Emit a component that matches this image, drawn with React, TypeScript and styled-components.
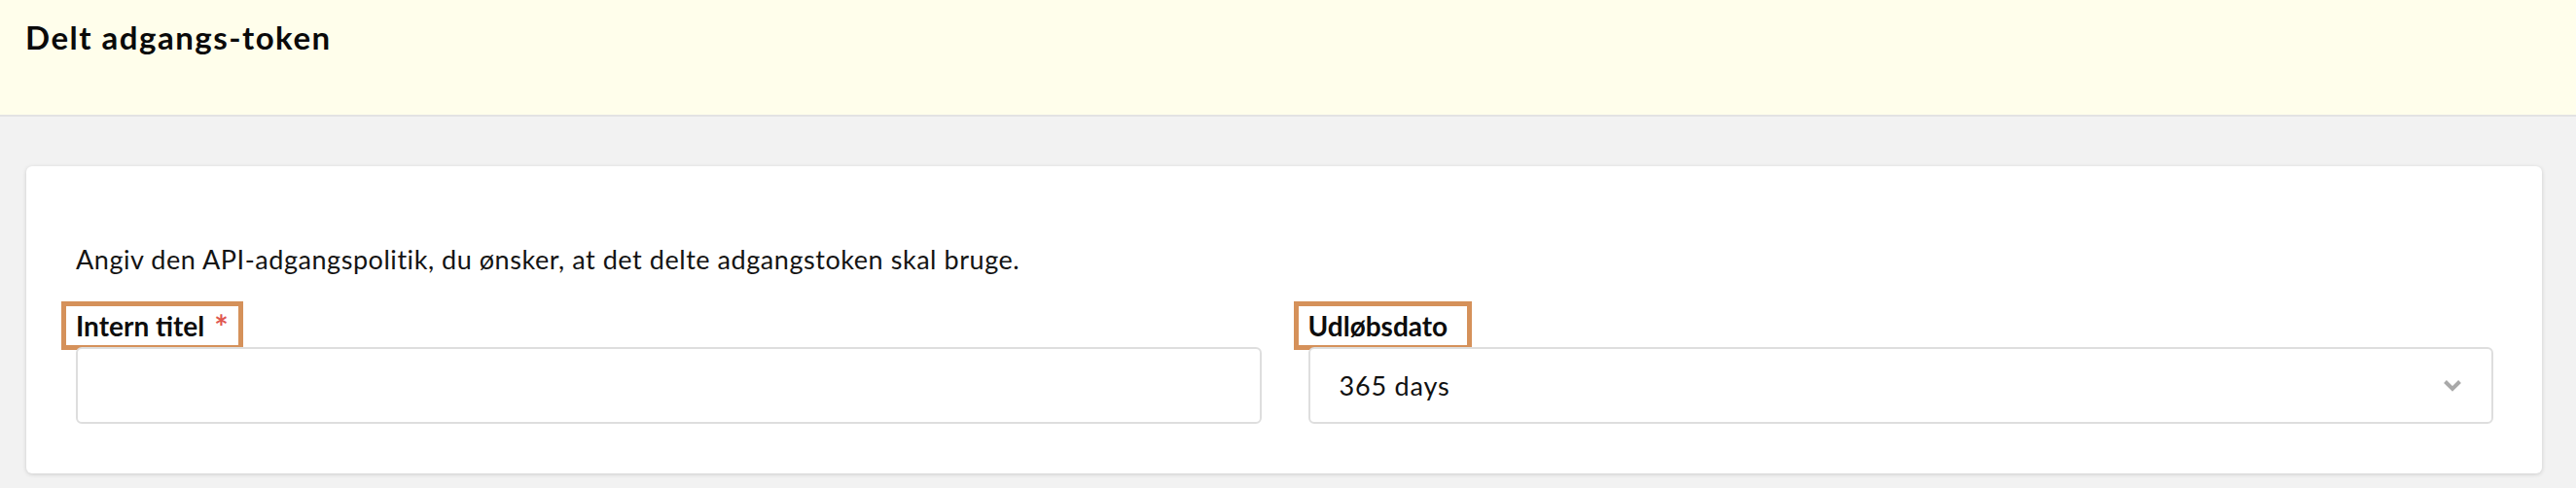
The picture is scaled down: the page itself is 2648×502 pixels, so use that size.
import React from "react";
import styled, { createGlobalStyle } from "styled-components";

const GlobalStyle = createGlobalStyle`
  html, body {
    margin: 0;
    padding: 0;
    background: #f2f2f2;
    font-family: Lato, "Liberation Sans", Arial, sans-serif;
    color: #111;
  }
  * { box-sizing: border-box; }
`;

const Header = styled.header`
  height: 120px;
  background: #fffeeb;
  border-bottom: 2px solid #e3e3e3;
  padding: 18px 26px 0;
`;

const Title = styled.h1`
  margin: 0;
  font-size: 33px;
  line-height: 40px;
  font-weight: 700;
  color: #0a0a0a;
  letter-spacing: 1.5px;
`;

const Main = styled.main`
  padding: 51px 35px 13px 27px;
`;

const Card = styled.section`
  background: #ffffff;
  border-radius: 6px;
  box-shadow: 0 1px 4px rgba(0, 0, 0, 0.16);
  padding: 80px 50px 51px 51px;
`;

const Description = styled.p`
  margin: 0 0 32px;
  font-size: 27px;
  line-height: 32px;
  letter-spacing: 0.55px;
  color: #141414;
`;

const Fields = styled.div`
  display: grid;
  grid-template-columns: 1fr 1fr;
  column-gap: 48px;
`;

const Field = styled.div`
  display: flex;
  flex-direction: column;
`;

const Label = styled.label<{ $padRight: number }>`
  align-self: flex-start;
  display: flex;
  align-items: center;
  height: 40px;
  margin: 0 0 2px -10px;
  padding: 0 ${(p) => p.$padRight}px 0 10px;
  outline: 5px solid #d5915a;
  font-size: 28px;
  font-weight: 700;
  color: #0d0d0d;
`;

const Required = styled.span`
  color: #e0574f;
  font-size: 34px;
  font-weight: 700;
  margin-left: 10px;
  align-self: flex-start;
  line-height: 34px;
  margin-top: 4px;
`;

const TextInput = styled.input`
  height: 79px;
  width: 100%;
  border: 2px solid #dedede;
  border-radius: 6px;
  background: #fff;
  font-family: inherit;
  font-size: 27px;
  padding: 0 30px;
  outline: none;
`;

const Select = styled.div`
  height: 79px;
  border: 2px solid #dedede;
  border-radius: 6px;
  background: #fff;
  display: flex;
  align-items: center;
  justify-content: space-between;
  padding: 0 30px 0 30px;
  font-size: 27px;
  letter-spacing: 0.8px;
  color: #111;
`;

const Chevron = () => (
  <svg width="20" height="13" viewBox="0 0 20 13" aria-hidden="true">
    <polyline
      points="2.5,2.5 10,10 17.5,2.5"
      fill="none"
      stroke="#a9a9a9"
      strokeWidth="4"
      strokeLinejoin="miter"
      strokeLinecap="butt"
    />
  </svg>
);

export default function App() {
  return (
    <>
      <GlobalStyle />
      <Header>
        <Title>Delt adgangs-token</Title>
      </Header>
      <Main>
        <Card>
          <Description>
            Angiv den API-adgangspolitik, du ønsker, at det delte adgangstoken skal bruge.
          </Description>
          <Fields>
            <Field>
              <Label $padRight={10}>
                Intern titel<Required>*</Required>
              </Label>
              <TextInput type="text" />
            </Field>
            <Field>
              <Label $padRight={20}>Udløbsdato</Label>
              <Select>
                <span>365 days</span>
                <Chevron />
              </Select>
            </Field>
          </Fields>
        </Card>
      </Main>
    </>
  );
}
